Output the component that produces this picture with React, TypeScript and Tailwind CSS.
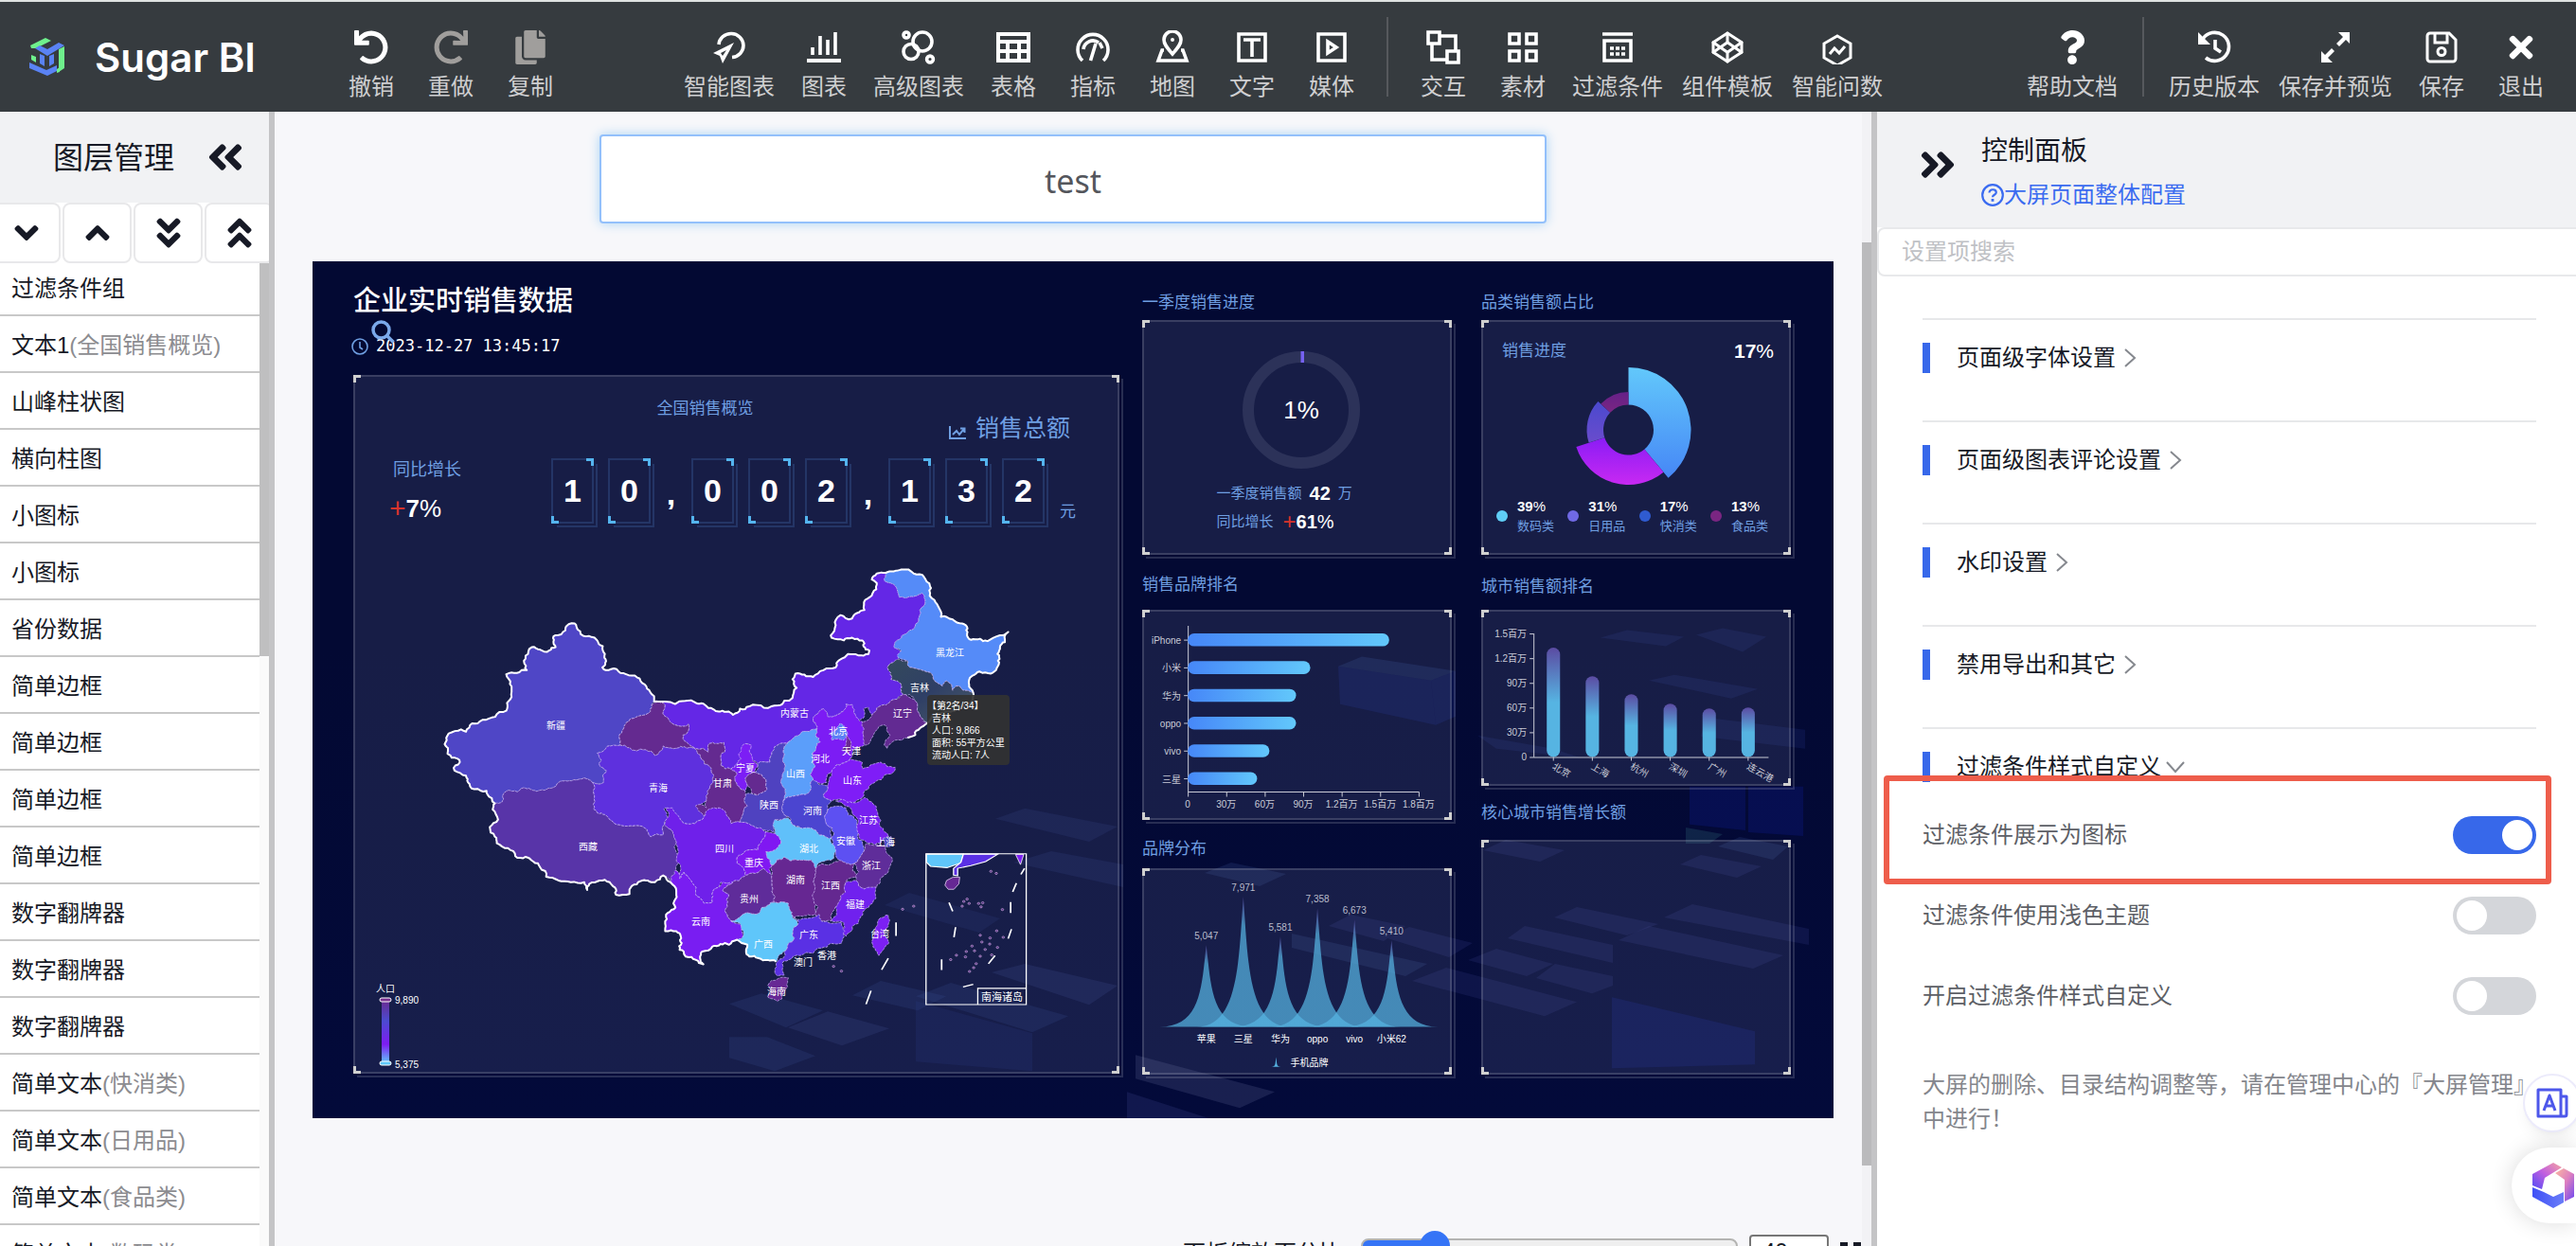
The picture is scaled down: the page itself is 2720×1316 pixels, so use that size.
import { useState } from "react"
import type { ReactNode } from "react"
import clsx from "clsx"
import {
  FaAngleDoubleDown,
  FaAngleDoubleLeft,
  FaAngleDoubleRight,
  FaAngleDoubleUp,
  FaAngleDown,
  FaAngleUp,
  FaCopy,
  FaQuestion,
  FaRedo,
  FaTimes,
  FaUndo,
} from "react-icons/fa"
import { FiCodepen } from "react-icons/fi"

/* ---------- toolbar icons ---------- */

function Icon({ children }: { children: ReactNode }) {
  return (
    <svg
      viewBox="0 0 36 36"
      className="size-9"
      fill="none"
      stroke="currentColor"
      strokeWidth="3.6"
      aria-hidden="true"
    >
      {children}
    </svg>
  )
}

const SmartIcon = () => (
  <Icon>
    <path d="M7 15A13 12.5 0 1 1 21 28.5" />
    <path
      fillRule="evenodd"
      d="M23 13 1 24l7 3 3 8ZM15 21l-4 6-2-3Z"
      fill="currentColor"
      stroke="none"
    />
  </Icon>
)

const BarsIcon = () => (
  <Icon>
    <path d="M0 32h36" strokeWidth="4" />
    <path d="M6 18v8M14 6v20M22 10v16M30 2v24" />
  </Icon>
)

const BubblesIcon = () => (
  <Icon>
    <circle cx="22" cy="12" r="10" />
    <circle cx="10" cy="22.5" r="8" />
    <circle cx="5" cy="5" r="3" />
    <circle cx="30" cy="30.5" r="3.4" />
  </Icon>
)

const TableIcon = () => (
  <Icon>
    <path
      fillRule="evenodd"
      fill="currentColor"
      stroke="none"
      d="M0 2h36v32H0ZM4 6v4h28V6ZM4 14v6h6v-6ZM14 14v6h8v-6ZM26 14v6h6v-6ZM4 24v6h6v-6ZM14 24v6h8v-6ZM26 24v6h6v-6Z"
    />
  </Icon>
)

const GaugeIcon = () => (
  <Icon>
    <path d="M7 32A16 16 0 1 1 29 32" />
    <path d="M8 20A10 10 0 0 1 24 13" />
    <path d="M15.500 32 21 14M28 19l-3-6" />
  </Icon>
)

const MapIcon = () => (
  <Icon>
    <path d="M18 25c-5-6-9-10-9-15a9 9 0 0 1 18 0c0 5-4 9-9 15Z" />
    <circle cx="18" cy="10" r="2" fill="currentColor" stroke="none" />
    <path d="M9 21H7L3 32h30l-4-11h-2" />
  </Icon>
)

const TextIcon = () => (
  <Icon>
    <path d="M4 4h28v28H4ZM9 10h18M18 10v18" />
  </Icon>
)

const MediaIcon = () => (
  <Icon>
    <path d="M4 4h28v28H4Z" />
    <path d="m14 12 9 6-9 6Z" />
  </Icon>
)

const LinkIcon = () => (
  <Icon>
    <path d="M2 2h12v12H2ZM22 22h12v12H22ZM14 6h17v16M6 14v17h16" />
  </Icon>
)

const MaterialIcon = () => (
  <Icon>
    <path d="M4 4h10v10H4ZM22 4h10v10H22ZM4 22h10v10H4ZM22 22h10v10H22Z" />
  </Icon>
)

const FilterIcon = () => (
  <Icon>
    <path d="M2 4h32M4 11h28v21H4Z" />
    <path d="M10 19h16M10 25h16" strokeDasharray="4 2" />
  </Icon>
)

const AskIcon = () => (
  <Icon>
    <path d="M18 6 32 14v15L18 37 4 29V14Z" strokeWidth="3" />
    <path d="m10 25 5-6 5 5 6-7" strokeWidth="3" />
  </Icon>
)

const HistoryIcon = () => (
  <Icon>
    <path d="M6 9a15 15 0 1 1 3 20" />
    <path d="M1 2v13h13Z" fill="currentColor" stroke="none" />
    <path d="M19 10v9l6 4" />
  </Icon>
)

const ExpandIcon = () => (
  <Icon>
    <path
      d="M33 2v12l-4-4-7 7-3-3 7-7-5-5ZM3 34V22l4 4 7-7 3 3-7 7 5 5Z"
      fill="currentColor"
      stroke="none"
    />
  </Icon>
)

const SaveIcon = () => (
  <Icon>
    <path
      d="M6 3h20l7 7v20a3 3 0 0 1-3 3H6a3 3 0 0 1-3-3V6a3 3 0 0 1 3-3Z"
      strokeWidth="3"
    />
    <path d="M11 4v9h13V4" strokeWidth="3" />
    <circle cx="18" cy="22.500" r="4" strokeWidth="3" />
  </Icon>
)

/* ---------- header ---------- */

type Tool = { label: string; icon: ReactNode; disabled?: boolean }

const editTools: Tool[] = [
  { label: "撤销", icon: <FaUndo /> },
  { label: "重做", icon: <FaRedo />, disabled: true },
  { label: "复制", icon: <FaCopy />, disabled: true },
]

const chartTools: Tool[] = [
  { label: "智能图表", icon: <SmartIcon /> },
  { label: "图表", icon: <BarsIcon /> },
  { label: "高级图表", icon: <BubblesIcon /> },
  { label: "表格", icon: <TableIcon /> },
  { label: "指标", icon: <GaugeIcon /> },
  { label: "地图", icon: <MapIcon /> },
  { label: "文字", icon: <TextIcon /> },
  { label: "媒体", icon: <MediaIcon /> },
]

const extraTools: Tool[] = [
  { label: "交互", icon: <LinkIcon /> },
  { label: "素材", icon: <MaterialIcon /> },
  { label: "过滤条件", icon: <FilterIcon /> },
  { label: "组件模板", icon: <FiCodepen /> },
  { label: "智能问数", icon: <AskIcon /> },
]

const pageTools: Tool[] = [
  { label: "历史版本", icon: <HistoryIcon /> },
  { label: "保存并预览", icon: <ExpandIcon /> },
  { label: "保存", icon: <SaveIcon /> },
  { label: "退出", icon: <FaTimes /> },
]

function ToolGroup({ tools }: { tools: Tool[] }) {
  return (
    <div className="flex pt-5">
      {tools.map((tool) => (
        <button
          key={tool.label}
          type="button"
          className="flex min-w-[84px] flex-col items-center gap-2 px-2.5 text-2xl text-[#cfcfd1]"
        >
          <span
            className={clsx(
              "text-4xl",
              tool.disabled ? "text-[#a09e9c]" : "text-white"
            )}
          >
            {tool.icon}
          </span>
          {tool.label}
        </button>
      ))}
    </div>
  )
}

const Divider = () => <div className="mx-4 h-[84px] w-0.5 bg-[#56595d]" />

function Logo() {
  return (
    <svg viewBox="0 0 37 40" className="w-[37px]" aria-hidden="true">
      <path d="M1 8 17 0l6 3L7 11H2Z" fill="#6ff08c" />
      <path d="m6 11 5-3 8 4 12-7 6 3-18 11Z" fill="#5a83f5" />
      <path d="m31 12 6-3v23l-6 4Z" fill="#6ff08c" />
      <path d="m29 33 3-2v5l-3 1ZM2 18l5 2v6l-5-3Z" fill="#6ff08c" />
      <path d="m11 17 5 2v11l-5-3ZM21 19l5-2v10l-5 3Z" fill="#5a83f5" />
      <path d="m0 26 18 8 11-5v6l-10 5L0 32Z" fill="#5a83f5" />
    </svg>
  )
}

function Header() {
  return (
    <header className="flex h-[118px] shrink-0 items-center border-t-2 border-[#dfe2e2] bg-[#363b3f] pr-4 pl-[31px]">
      <a href="#home" className="flex items-center gap-8">
        <Logo />
        <span className="font-['Inter',sans-serif] text-[42px] font-semibold whitespace-nowrap text-white">
          Sugar BI
        </span>
      </a>
      <nav className="flex flex-1 items-center pl-20 leading-8">
        <ToolGroup tools={editTools} />
        <div className="ml-[110px] flex items-center">
          <ToolGroup tools={chartTools} />
          <Divider />
          <ToolGroup tools={extraTools} />
        </div>
        <div className="ml-auto flex items-center">
          <ToolGroup tools={[{ label: "帮助文档", icon: <FaQuestion /> }]} />
          <Divider />
          <ToolGroup tools={pageTools} />
        </div>
      </nav>
    </header>
  )
}

/* ---------- layer list ---------- */

const layers: [string, string?][] = [
  ["过滤条件组"],
  ["文本1", "(全国销售概览)"],
  ["山峰柱状图"],
  ["横向柱图"],
  ["小图标"],
  ["小图标"],
  ["省份数据"],
  ["简单边框"],
  ["简单边框"],
  ["简单边框"],
  ["简单边框"],
  ["数字翻牌器"],
  ["数字翻牌器"],
  ["数字翻牌器"],
  ["简单文本", "(快消类)"],
  ["简单文本", "(日用品)"],
  ["简单文本", "(食品类)"],
  ["简单文本", "(数码类)"],
]

const orderButtons = [
  { label: "下移", icon: <FaAngleDown /> },
  { label: "上移", icon: <FaAngleUp /> },
  { label: "置底", icon: <FaAngleDoubleDown /> },
  { label: "置顶", icon: <FaAngleDoubleUp /> },
]

function LayerPanel() {
  return (
    <aside className="flex w-[290px] shrink-0 flex-col overflow-hidden border-r-6 border-[#c4c4c6] bg-white">
      <div className="flex h-24 shrink-0 items-center justify-between bg-[#f1f2f4] pr-6 pl-14">
        <h2 className="pt-0.5 text-[32px] text-[#171a26]">图层管理</h2>
        <button type="button" aria-label="收起图层" className="text-[44px]">
          <FaAngleDoubleLeft />
        </button>
      </div>
      <div className="-ml-[9px] flex shrink-0 gap-0.5">
        {orderButtons.map((b) => (
          <button
            key={b.label}
            type="button"
            aria-label={b.label}
            className="flex h-16 w-[73px] shrink-0 items-center justify-center rounded-lg border-2 border-[#e8e8ea] text-[40px]"
          >
            {b.icon}
          </button>
        ))}
      </div>
      <div className="flex min-h-0 flex-1 overflow-hidden">
        <ul className="-mt-1 flex-1">
          {layers.map(([name, note], i) => (
            <li key={i} className="h-[60px] border-b-2 border-[#c8c8c8]">
              <button type="button" className="h-full w-full px-3 pt-1 text-left text-2xl">
                {name}
                {note && <span className="text-[#8c8c90]">{note}</span>}
              </button>
            </li>
          ))}
        </ul>
        <div className="w-2.5 bg-[#fafafa]">
          <div className="h-2/5 bg-[#bfbfc0]" />
        </div>
      </div>
    </aside>
  )
}

/* ---------- dashboard pieces ---------- */

const corners = [
  "top-0 left-0 border-t-3 border-l-3",
  "top-0 right-0 border-t-3 border-r-3",
  "bottom-0 left-0 border-b-3 border-l-3",
  "bottom-0 right-0 border-b-3 border-r-3",
]

function Frame({ children, className }: { children?: ReactNode; className?: string }) {
  return (
    <div className={clsx("relative bg-[#8f92b8]/15", className)}>
      {children}
      <div className="pointer-events-none absolute inset-0 border-2 border-white/15" />
      <div className="pointer-events-none absolute inset-0 top-1 left-1 -right-1 -bottom-1 border-r-2 border-b-2 border-white/15" />
      {corners.map((c) => (
        <div key={c} className={clsx("absolute size-2 border-[#cfcfcf]", c)} />
      ))}
    </div>
  )
}

function WidgetTitle({ children, className }: { children: ReactNode; className?: string }) {
  return (
    <h3 className={clsx("flex items-end text-[17px] leading-6 text-[#6f9fe2]", className)}>
      {children}
    </h3>
  )
}

const scenery: [string, string][] = [
  ["1566,897 1590,886 1652,897 1626,909", "#3a4390"],
  ["1641,968 1665,957 1751,975 1718,987", "#3a4390"],
  ["1592,990 1610,977 1703,997 1703,1016", "#3a4390"],
  ["1550,1013 1580,1001 1640,1017 1612,1030", "#3a4390"],
  ["1622,1032 1642,1017 1703,1030 1703,1040 1681,1048", "#3a4390"],
  ["1491,1035 1527,1021 1665,1057 1631,1072", "#3a4390"],
  ["1757,968 1787,954 1910,980 1910,997", "#3a4390"],
  ["1709,992 1741,977 1883,1008 1851,1022", "#3a4390"],
  ["1814,893 1837,883 1888,893 1872,907", "#3f5ca0"],
  ["1774,912 1796,902 1860,914 1834,926", "#3a4390"],
  ["1780,873 1819,880 1805,890 1780,890", "#3f8a90"],
  ["1784,830 1843,830 1843,876 1784,870", "#1222c0"],
  ["1846,830 1904,830 1904,882 1846,878", "#1222c0"],
  ["1702,1052 1853,1088 1853,1123 1702,1127", "#1c2cb0"],
  ["1199,1113 1346,1152 1309,1169 1199,1138", "#7377a8"],
  ["1190,1152 1277,1180 1190,1180", "#4a50a0"],
  ["1403,977 1426,965 1484,977 1461,993", "#3a4390"],
  ["1465,990 1488,978 1555,995 1530,1010", "#3a4390"],
  ["1364,985 1507,1017 1484,1030 1364,1000", "#3f5ca0"],
  ["1272,921 1300,910 1358,922 1330,935", "#3f5ca0"],
  ["1413,703 1438,693 1537,708 1511,718", "#3a5ab0"],
  ["1413,703 1511,718 1516,765 1415,743", "#2030a8"],
  ["1511,718 1537,708 1537,756 1516,765", "#2030a8"],
  ["1690,673 1718,665 1778,672 1759,682", "#2a3790"],
  ["1791,670 1819,663 1865,672 1840,688", "#2a3790"],
  ["1741,718 1768,712 1856,727 1828,737", "#2a3790"],
  ["1801,757 1906,770 1906,790 1796,777", "#2a3790"],
  ["1560,776 1640,790 1670,800 1580,790", "#2a3790"],
  ["832,1084 874,1067 939,1085 889,1103", "#3c4a98"],
  ["900,1050 930,1035 999,1051 969,1066", "#2c4490"],
  ["770,1059 804,1048 869,1066 830,1084", "#2c4490"],
  ["770,1094 810,1094 861,1114 818,1130 770,1116", "#2c4490"],
  ["1047,1026 1082,1017 1180,1040 1150,1060", "#3c4a98"],
  ["967,1051 1004,1037 1128,1072 1090,1089", "#2c4490"],
  ["967,1056 1090,1090 1090,1130 967,1120", "#1c2c80"],
  ["1051,864 1082,853 1180,872 1150,888", "#2c3a88"],
  ["1070,910 1110,898 1186,912 1186,936", "#2c3a88"],
  ["934,955 960,942 1056,969 1034,984", "#24347c"],
]

function Scenery() {
  return (
    <svg
      viewBox="330 276 1606 904"
      preserveAspectRatio="none"
      className="absolute inset-0 size-full"
      aria-hidden="true"
    >
      {scenery.map(([points, fill]) => (
        <polygon key={points} points={points} fill={fill} opacity=".2" />
      ))}
    </svg>
  )
}

/* ---------- china map ---------- */

type Pt = [number, number]

const parse = (s: string): Pt[] =>
  s.split(" ").map((p) => p.split(",").map(Number) as Pt)

// Breaks straight segments into a slightly jagged line, the same way in both
// directions so that neighbours share their border.
function jag(a: Pt, b: Pt, depth: number): Pt[] {
  const len = Math.hypot(b[0] - a[0], b[1] - a[1])
  if (depth === 0 || len < 9) return [b]
  const flip = a[0] > b[0] || (a[0] === b[0] && a[1] > b[1]) ? -1 : 1
  const h = Math.sin((a[0] + b[0]) * 12.9898 + (a[1] + b[1]) * 78.233) * 43758.5453
  const r = (h - Math.floor(h) - 0.5) * 0.4 * flip
  const m: Pt = [
    (a[0] + b[0]) / 2 - (b[1] - a[1]) * r,
    (a[1] + b[1]) / 2 + (b[0] - a[0]) * r,
  ]
  return [...jag(a, m, depth - 1), ...jag(m, b, depth - 1)]
}

function rough(s: string, close = true) {
  const pts = parse(s)
  const ring = close ? [...pts, pts[0]] : pts
  const out: Pt[] = [ring[0]]
  for (let i = 1; i < ring.length; i++) out.push(...jag(ring[i - 1], ring[i], 3))
  return "M" + out.map((p) => p.map(Math.round).join(",")).join("L") + (close ? "Z" : "")
}

const provinces: [string, string][] = [
  ["#4f46c6", "70,572 78,545 108,533 120,540 135,515 160,505 218,478 220,455 230,430 218,370 268,358 266,345 280,290 300,297 322,300 338,290 337,255 362,240 370,222 385,220 392,238 412,258 438,268 458,310 452,350 460,358 510,370 555,400 578,450 572,460 565,485 530,500 503,532 496,580 440,603 450,625 445,640 462,655 455,690 428,690 400,680 355,686 340,700 300,713 265,707 245,718 218,716 208,748 190,752 172,725 170,715 140,710 125,690 120,670 92,655 105,630 100,620 75,605"],
  ["#5834a8", "190,752 208,748 218,716 245,718 265,707 300,713 340,700 355,686 400,680 428,690 430,755 440,780 470,800 520,818 550,820 570,850 600,845 603,815 620,830 632,870 640,960 630,975 618,990 600,965 580,985 545,982 518,1020 485,1022 482,1000 470,985 445,980 420,990 415,1008 408,985 375,985 345,980 300,940 265,910 240,908 195,870 190,850 178,822 198,800 185,770"],
  ["#5e30de", "440,603 496,580 530,595 580,610 590,600 600,582 625,590 660,588 690,608 700,635 718,650 722,690 708,715 705,745 690,755 700,790 678,812 655,812 640,795 620,770 603,765 608,800 603,815 600,845 570,850 550,820 520,818 470,800 440,780 430,755 428,690 455,690 462,655 445,640 450,625"],
  ["#6427e6", "578,450 680,455 710,470 735,480 770,490 810,465 880,462 915,440 918,425 925,410 915,385 922,368 965,378 990,358 1020,350 1050,310 1100,310 1102,300 1085,270 1060,262 1040,270 1010,262 1008,255 1020,225 1032,195 1060,205 1090,180 1092,150 1120,105 1108,90 1120,72 1142,70 1140,95 1165,108 1175,142 1200,140 1230,130 1238,150 1225,180 1222,215 1200,240 1165,275 1162,290 1180,310 1172,330 1148,345 1155,385 1175,395 1185,430 1150,455 1120,470 1108,490 1100,468 1088,472 1080,505 1068,490 1060,460 1045,458 1038,480 1000,495 990,472 972,490 975,530 935,545 905,570 885,575 865,600 860,630 830,635 815,615 808,575 795,580 790,620 765,650 740,640 740,610 750,600 748,572 712,575 710,600 680,590 665,580 648,550 660,540 662,517 635,522 612,500 600,455"],
  ["#642a90", "572,460 578,455 600,455 612,500 635,522 662,517 660,540 648,550 665,580 680,590 710,600 712,575 748,572 750,600 740,610 740,640 765,650 780,665 782,700 800,715 805,760 792,790 788,808 765,812 760,795 735,765 712,775 700,790 678,760 690,755 705,765 705,745 708,715 722,690 718,650 700,635 690,608 660,588 625,590 600,582 590,600 580,610 530,595 496,580 503,532 530,500 565,485"],
  ["#642a90", "805,670 825,660 850,680 850,715 830,728 815,722 805,700"],
  ["#7c1ef5", "765,650 790,620 790,590 800,575 815,580 810,600 818,625 830,640 825,660 805,670 805,700 800,715 782,700 780,665"],
  ["#558bf8", "1142,70 1180,60 1210,72 1235,82 1252,115 1270,170 1276,200 1305,208 1340,230 1350,268 1390,272 1420,255 1440,245 1432,275 1420,290 1415,330 1398,368 1370,362 1352,375 1355,425 1335,418 1320,405 1305,418 1290,390 1280,405 1258,385 1250,365 1220,355 1200,350 1195,330 1172,320 1180,300 1162,290 1165,275 1200,240 1222,215 1225,180 1238,150 1230,130 1200,140 1175,142 1165,108 1140,95"],
  ["url(#hover)", "1148,345 1172,325 1195,330 1200,350 1220,355 1250,365 1258,385 1280,405 1290,390 1305,418 1320,405 1335,418 1355,425 1352,450 1310,478 1290,480 1240,515 1230,500 1215,450 1200,430 1185,430 1175,395 1155,385"],
  ["#622a92", "1190,430 1215,450 1230,500 1242,515 1225,530 1195,558 1165,565 1145,590 1138,580 1152,550 1140,520 1125,525 1110,555 1092,580 1085,540 1082,515 1108,490 1120,470 1150,455"],
  ["#7c1cf4", "972,490 990,472 1000,495 1038,480 1045,458 1060,460 1068,490 1085,510 1088,555 1090,580 1065,590 1055,620 1020,640 1000,665 998,690 965,682 970,640 965,600 982,570 975,530"],
  ["#5b7ff6", "1008,545 1030,515 1048,540 1040,565 1010,565"],
  ["#6a2a90", "1045,550 1058,575 1050,605 1035,595"],
  ["#5b9efa", "935,545 975,530 982,570 965,600 970,640 965,682 958,715 930,728 892,745 890,700 895,655 892,600 905,570"],
  ["#4f42c0", "860,630 865,600 885,575 905,570 892,600 895,655 890,700 892,745 902,790 872,800 870,838 830,825 788,808 792,790 805,760 800,725 830,728 850,715 850,680 825,660 830,635"],
  ["#7f1df7", "1000,700 1010,660 1020,640 1055,620 1085,630 1085,650 1100,645 1130,630 1165,645 1155,665 1120,685 1100,710 1085,735 1060,750 1010,745 990,725"],
  ["#4b45d0", "892,745 930,728 958,715 965,682 1000,700 990,725 1010,745 1000,775 995,800 1012,825 1010,855 960,825 930,820 902,790"],
  ["#7620f0", "1020,745 1060,750 1090,735 1112,755 1128,820 1150,850 1130,870 1100,870 1078,855 1075,810 1045,760"],
  ["#5d50f2", "1000,775 1020,760 1045,765 1070,800 1075,840 1085,870 1085,900 1065,930 1030,920 1010,880 1012,825 995,800"],
  ["#4c46c8", "1135,855 1155,850 1160,875 1138,880"],
  ["#60c0fa", "872,800 905,795 915,815 960,825 1010,855 1018,880 1015,915 985,925 970,945 960,920 930,920 895,910 865,935 850,895 880,880 885,860 872,835"],
  ["#8018f2", "850,835 885,860 880,880 850,895 865,935 862,970 845,945 800,965 780,930 785,905 830,890 840,860"],
  ["#6f20ea", "603,815 608,765 622,765 640,795 655,812 678,812 700,790 725,765 745,770 760,795 765,812 788,808 830,825 850,835 840,860 830,890 785,905 780,930 800,965 770,985 740,985 735,1000 720,1045 700,1048 680,1000 650,955 640,975 632,870 620,830"],
  ["#5f2c9a", "745,1010 770,985 800,965 845,945 865,980 870,1045 840,1060 825,1080 790,1085 765,1100 755,1050 760,1025"],
  ["#791df2", "630,950 640,975 650,955 680,1000 700,1048 720,1045 735,1000 745,985 770,985 745,1010 760,1025 755,1050 765,1100 790,1110 795,1145 780,1155 760,1170 720,1175 695,1190 698,1228 680,1215 655,1205 650,1190 640,1185 645,1165 632,1130 605,1130 605,1100 630,1060 632,1010 618,985"],
  ["#662792", "865,935 895,910 930,920 960,920 972,945 968,990 972,1080 935,1085 915,1090 905,1048 870,1045 865,980"],
  ["#642890", "972,945 985,930 1030,920 1065,930 1070,970 1045,985 1030,1050 1010,1100 985,1100 970,1080 968,990"],
  ["#5f2d9a", "1065,930 1085,900 1095,870 1140,880 1155,910 1145,960 1120,1000 1090,1005 1070,980"],
  ["#7021ee", "1045,985 1070,980 1090,1005 1118,1000 1100,1060 1080,1090 1045,1145 1035,1130 1040,1105 1010,1100 1020,1060 1030,1040"],
  ["#5fc6fa", "765,1100 790,1085 825,1080 840,1060 870,1045 905,1048 915,1090 928,1110 920,1150 895,1190 875,1220 855,1215 810,1205 805,1170 780,1155 795,1145 790,1115"],
  ["#5a30e4", "920,1150 928,1110 918,1088 980,1080 985,1100 1035,1105 1042,1130 1035,1165 985,1180 965,1195 905,1215 890,1225 895,1260 878,1262 875,1225 895,1190"],
  ["#662894", "855,1290 880,1270 905,1268 903,1295 878,1337 855,1325"],
  ["#7c20f4", "1125,1095 1148,1082 1145,1120 1125,1202 1108,1160"],
]

const border =
  "1195,558 1225,530 1242,515 1290,480 1310,478 1352,450 1355,425 1352,375 1370,362 1398,368 1415,330 1420,290 1432,275 1440,245 1420,255 1390,272 1350,268 1340,230 1305,208 1276,200 1270,170 1252,115 1235,82 1210,72 1180,60 1142,70 1120,72 1108,90 1120,105 1092,150 1090,180 1060,205 1032,195 1020,225 1008,255 1010,262 1040,270 1060,262 1085,270 1102,300 1100,310 1050,310 1020,350 990,358 965,378 922,368 915,385 925,410 918,425 915,440 880,462 810,465 770,490 735,480 710,470 680,455 578,450 555,400 510,370 460,358 452,350 458,310 438,268 412,258 392,238 385,220 370,222 362,240 337,255 338,290 322,300 300,297 280,290 266,345 268,358 218,370 230,430 220,455 218,478 160,505 135,515 120,540 108,533 78,545 70,572 75,605 100,620 105,630 92,655 120,670 125,690 140,710 170,715 172,725 190,752 185,770 198,800 178,822 190,850 195,870 240,908 265,910 300,940 345,980 375,985 408,985 415,1008 420,990 445,980 470,985 482,1000 485,1022 518,1020 545,982 580,985 600,965 618,985 632,1010 630,1060 605,1100 605,1130 632,1130 645,1165 640,1185 650,1190 655,1205 680,1215 698,1228 695,1190 720,1175 760,1170 780,1155 805,1170 810,1205 855,1215 875,1220"

// label positions in the svg's own pixels
const provinceLabels: [string, number, number][] = [
  ["新疆", 214, 187],
  ["西藏", 248, 315],
  ["青海", 322, 253],
  ["内蒙古", 466, 174],
  ["甘肃", 390, 248],
  ["宁夏", 414, 232],
  ["黑龙江", 630, 110],
  ["吉林", 598, 147],
  ["辽宁", 580, 174],
  ["北京", 512, 193],
  ["天津", 526, 214],
  ["河北", 493, 222],
  ["山西", 467, 238],
  ["陕西", 439, 271],
  ["山东", 527, 245],
  ["河南", 485, 277],
  ["江苏", 544, 287],
  ["安徽", 520, 309],
  ["上海", 562, 310],
  ["湖北", 481, 317],
  ["重庆", 423, 332],
  ["四川", 392, 317],
  ["贵州", 418, 370],
  ["云南", 367, 394],
  ["湖南", 467, 350],
  ["江西", 504, 356],
  ["浙江", 547, 335],
  ["福建", 530, 376],
  ["广西", 433, 418],
  ["广东", 481, 408],
  ["香港", 500, 430],
  ["澳门", 475, 437],
  ["海南", 447, 468],
  ["台湾", 556, 407],
]

const tooltipLines = [
  "【第2名/34】",
  "吉林",
  "人口: 9,866",
  "面积: 55平方公里",
  "流动人口: 7人",
]

const islets =
  "1340,1035 1345,1048 1332,1042 1368,1048 1378,1046 1374,1058 1328,1056 1398,953 1411,959 1426,1066 1412,1129 1372,1142 1376,1162 1395,1168 1428,1148 1396,1150 1414,1178 1352,1174 1358,1188 1372,1204 1338,1190 1336,1206 1400,1200 1384,1184 1314,1201 1300,1214 1362,1226 1356,1238 1346,1249 1183,1065 1210,1056 1034,1248 1015,1234"

function ChinaMap() {
  return (
    <svg viewBox="0 0 809 554" className="block w-full" role="img" aria-label="省份数据">
      <defs>
        <linearGradient id="hover" x1="0" y1="0" x2="1" y2="1">
          <stop offset="0" stopColor="#344a5c" />
          <stop offset=".5" stopColor="#2f3f66" />
          <stop offset="1" stopColor="#4a5c66" />
        </linearGradient>
        <linearGradient id="range" x1="0" y1="0" x2="0" y2="1">
          <stop offset="0" stopColor="#6b2a90" />
          <stop offset=".33" stopColor="#4b4bd0" />
          <stop offset=".7" stopColor="#7e1cf4" />
          <stop offset="1" stopColor="#60c8fa" />
        </linearGradient>
      </defs>

      <g transform="translate(67 0) scale(.4337 .3571)">
        {provinces.map(([fill, points]) => (
          <path
            key={points}
            d={rough(points)}
            fill={fill}
            stroke="#cdb8f5"
            strokeWidth=".7"
            strokeDasharray="3 1"
            vectorEffect="non-scaling-stroke"
          />
        ))}
        <path
          d={rough(border, false)}
          fill="none"
          stroke="#fff"
          strokeWidth="2"
          strokeLinejoin="round"
          vectorEffect="non-scaling-stroke"
        />
        <path
          d="M1167,1104v40M1148,1210l-16,34M1106,1306l-12,40M1296,1045l9,26M1312,1118l-4,30M1278,1213v32M1408,1202l-16,24M1448,1124l-8,28M1446,1044v32M1460,988l-9,26M1480,944l-9,18M1330,1295l25,-8"
          stroke="#fff"
          strokeWidth="4"
        />
        <path
          d="M1241,902h90l-6,26-34,14-40,-4-10,-12Z"
          fill="#5fc6fa"
          stroke="#fff"
          strokeWidth="3"
        />
        <path
          d="M1331,902h84l-30,22-36,12-32,8 0,22-10,-2v-20l18,-18Z"
          fill="#5a30e4"
          stroke="#fff"
          strokeWidth="3"
        />
        <path
          d="M1290,980l16,-10 16,0-2,20-12,16-14,0-8,-12Z"
          fill="#662894"
          stroke="#ead7f7"
          strokeWidth="2"
        />
        <path d="M1458,903h20l-8,30Z" fill="#7c20f4" stroke="#fff" strokeWidth="2" />
        {parse(islets).map(([x, y]) => (
          <circle key={`${x}-${y}`} cx={x} cy={y} r="3" fill="#4a2a80" stroke="#e3b8ea" strokeWidth="1.500" />
        ))}
        <g fill="none" stroke="#fff" strokeWidth="3">
          <path d="M1240,901h244v446h-244Z" />
          <path d="M1366,1347v-48h118" />
        </g>
      </g>

      <g fill="#fff" fontSize="10" textAnchor="middle">
        {provinceLabels.map(([name, x, y]) => (
          <text key={name} x={x} y={y + 3}>
            {name}
          </text>
        ))}
        <text x="685" y="477" fontSize="11">
          南海诸岛
        </text>
      </g>

      <g fill="#fff" fontSize="10">
        <text x="24" y="468">人口</text>
        <rect x="30" y="476" width="8" height="67" fill="url(#range)" />
        <rect x="28" y="474" width="12" height="4" rx="2" fill="#7a3090" stroke="#fff" />
        <rect x="28" y="541" width="12" height="4" rx="2" fill="#60c8fa" stroke="#fff" />
        <text x="44" y="480">9,890</text>
        <text x="44" y="548">5,375</text>
      </g>

      <rect x="606" y="154" width="87" height="74" rx="4" fill="#323232" fillOpacity=".92" />
      <g fill="#fff" fontSize="10">
        {tooltipLines.map((line, i) => (
          <text key={line} x={i === 0 ? 606 : 611} y={169 + i * 13}>
            {line}
          </text>
        ))}
      </g>
    </svg>
  )
}

/* ---------- sales overview ---------- */

function DigitBox({ digit }: { digit: string }) {
  return (
    <div className="relative flex h-[69px] w-[45px] items-center justify-center border-2 border-[#243566]">
      {digit}
      <div className="absolute top-1 left-1 -right-1.5 -bottom-1.5 border-r-2 border-b-2 border-[#243566]" />
      <div className="absolute -top-0.5 -right-0.5 size-2 border-t-3 border-r-3 border-[#54b4ee]" />
      <div className="absolute -bottom-0.5 -left-0.5 size-2 border-b-3 border-l-3 border-[#54b4ee]" />
    </div>
  )
}

function Overview() {
  return (
    <Frame className="mt-[18px]">
      <p className="pt-[26px] pr-[66px] text-center text-[17px] leading-5 text-[#6f9fe2]">
        全国销售概览
      </p>
      <p className="flex h-[22px] items-center justify-end gap-2.5 pr-[52px] text-[25px] text-[#6f9fe2]">
        <svg viewBox="0 0 18 14" className="mt-2 w-[18px]" fill="none" stroke="currentColor" strokeWidth="2" aria-hidden="true">
          <path d="M1 0v13h17" />
          <path d="m4 9 4-4 3 4 5-6M12 2.500h4.500V7" />
        </svg>
        销售总额
      </p>
      <div className="flex pt-5 pb-[27px] pl-[42px]">
        <div className="flex-1">
          <p className="text-lg leading-6 text-[#6f9fe2]">同比增长</p>
          <p className="flex items-center pt-[13px] text-[26px] leading-8 text-white">
            <span className="-ml-1 text-[30px] text-[#d8342c]">+</span>
            <b>7</b>%
          </p>
        </div>
        <div className="flex gap-[15px] text-[34px] font-bold text-white">
          {[..."10,002,132"].map((c, i) =>
            c === "," ? (
              <span key={i} className="w-[13px] pt-3 text-center">
                ,
              </span>
            ) : (
              <DigitBox key={i} digit={c} />
            )
          )}
        </div>
        <span className="mr-[46px] ml-4 self-end text-[17px] leading-6 text-[#6f9fe2]">元</span>
      </div>
      <ChinaMap />
    </Frame>
  )
}

/* ---------- small charts ---------- */

function QuarterProgress() {
  return (
    <Frame className="flex h-[248px] flex-col items-center pt-[33px] pl-2 text-[15px] text-[#6f9fe2]">
      <svg viewBox="0 0 124 124" className="h-[124px] shrink-0" role="img" aria-label="1%">
        <circle cx="62" cy="62" r="56" fill="none" stroke="#2c3259" strokeWidth="12" />
        <path d="M61.500 0v12h3.500V0Z" fill="#7561f0" />
        <text x="62" y="71" fontSize="26" fontWeight="500" fill="#fff" textAnchor="middle">
          1%
        </text>
      </svg>
      <div className="mt-[11px] w-[178px]">
        <p className="flex h-[30px] items-center gap-2">
          一季度销售额 <b className="text-xl text-white">42</b> 万
        </p>
        <p className="flex h-[30px] items-center gap-2.5">
          同比增长
          <span className="flex items-center text-xl text-white">
            <span className="text-2xl text-[#d8342c]">+</span>
            <b>61</b>%
          </span>
        </p>
      </div>
    </Frame>
  )
}

const categories = [
  { name: "数码类", share: 39, radius: 66, fill: "url(#rose0)", dot: "bg-[#5fcdf5]" },
  { name: "日用品", share: 31, radius: 58, fill: "url(#rose1)", dot: "bg-[#7069e4]" },
  { name: "快消类", share: 17, radius: 44, fill: "url(#rose2)", dot: "bg-[#2f5bd0]" },
  { name: "食品类", share: 13, radius: 40, fill: "url(#rose3)", dot: "bg-[#7a2682]" },
]

const roseColors = [
  ["#62c8fb", "#4687f6"],
  ["#8a1cf5", "#c829f2"],
  ["#4a49cf", "#6a4ccc"],
  ["#652088", "#7a2682"],
]

function slice(from: number, to: number, r: number) {
  const at = (share: number, radius: number) => {
    const a = (share / 100) * Math.PI * 2
    return `${Math.sin(a) * radius} ${-Math.cos(a) * radius}`
  }
  return `M${at(from, 26.5)}L${at(from, r)}A${r} ${r} 0 0 1 ${at(to, r)}L${at(to, 26.5)}A26.5 26.5 0 0 0 ${at(from, 26.5)}Z`
}

function CategoryShare() {
  let start = 0
  return (
    <Frame className="flex h-[248px] flex-col pt-3">
      <div className="flex h-[38px] shrink-0 items-center justify-between pt-1 pr-[18px] pl-[22px]">
        <span className="text-[17px] text-[#6f9fe2]">销售进度</span>
        <span className="text-[21px] text-white">
          <b>17</b>%
        </span>
      </div>
      <svg viewBox="-66 -66 132 132" className="mr-4 h-[132px] shrink-0" role="img" aria-label="品类销售额占比">
        {roseColors.map(([a, b], i) => (
          <linearGradient key={a} id={`rose${i}`} x1="0" y1="0" x2="0" y2="1">
            <stop offset="0" stopColor={a} />
            <stop offset="1" stopColor={b} />
          </linearGradient>
        ))}
        {categories.map((c) => {
          const from = start
          start += c.share
          return <path key={c.name} d={slice(from, start, c.radius)} fill={c.fill} />
        })}
      </svg>
      <ul className="mt-1 flex justify-between pr-6 pl-4">
        {categories.map((c) => (
          <li key={c.name} className="flex items-center gap-2.5">
            <span className={clsx("size-3 rounded-full", c.dot)} />
            <span className="text-[13px] leading-[21px] text-[#6f9fe2]">
              <span className="block text-[15px] text-white">
                <b>{c.share}</b>%
              </span>
              {c.name}
            </span>
          </li>
        ))}
      </ul>
    </Frame>
  )
}

const brands: [string, number][] = [
  ["iPhone", 212],
  ["小米", 129],
  ["华为", 114],
  ["oppo", 114],
  ["vivo", 86],
  ["三星", 73],
]

function BrandRanking() {
  return (
    <Frame>
      <svg viewBox="0 0 326 221" className="block w-full" fontSize="10" fill="#c9cbd6" role="img" aria-label="销售品牌排名">
        <linearGradient id="brand">
          <stop offset="0" stopColor="#4687f8" />
          <stop offset="1" stopColor="#62c8fb" />
        </linearGradient>
        <path d="M48.500 17v175h243" fill="none" stroke="#c9cbd6" />
        {brands.map(([name, w], i) => {
          const y = 32 + i * 29.2
          return (
            <g key={name}>
              <path d={`M44 ${y}h4`} stroke="#c9cbd6" />
              <text x="41" y={y + 4} textAnchor="end">
                {name}
              </text>
              <rect x="48" y={y - 7} width={w} height="13.500" rx="6.700" fill="url(#brand)" />
            </g>
          )
        })}
        {["0", "30万", "60万", "90万", "1.2百万", "1.5百万", "1.8百万"].map((t, i) => (
          <g key={t} textAnchor="middle">
            <path d={`M${48.5 + i * 40.5} 192v5`} stroke="#c9cbd6" />
            <text x={48 + i * 40.5} y="208">
              {t}
            </text>
          </g>
        ))}
      </svg>
    </Frame>
  )
}

const cities: [string, number][] = [
  ["北京", 115],
  ["上海", 85],
  ["杭州", 66],
  ["深圳", 56],
  ["广州", 51],
  ["连云港", 52],
]

function CityRanking() {
  return (
    <Frame>
      <svg viewBox="0 0 326 185" className="block w-full" fontSize="10" fill="#c9cbd6" role="img" aria-label="城市销售额排名">
        <linearGradient id="city" x1="0" y1="0" x2="0" y2="1">
          <stop offset="0" stopColor="#5b4ba2" />
          <stop offset=".5" stopColor="#56b4e2" />
        </linearGradient>
        <path d="M55.500 25v130.500h247" fill="none" stroke="#c9cbd6" />
        {["0", "30万", "60万", "90万", "1.2百万", "1.5百万"].map((t, i) => (
          <g key={t} textAnchor="end">
            <path d={`M51 ${155.5 - i * 26}h4`} stroke="#c9cbd6" />
            <text x="48" y={159 - i * 26}>
              {t}
            </text>
          </g>
        ))}
        {cities.map(([name, h], i) => {
          const x = 76 + i * 41
          return (
            <g key={name}>
              <rect x={x - 7} y={155 - h} width="14" height={h} rx="7" fill="url(#city)" />
              <path d={`M${x} 155v4`} stroke="#c9cbd6" />
              <text transform={`translate(${x - 2} 167) rotate(30)`}>{name}</text>
            </g>
          )
        })}
      </svg>
    </Frame>
  )
}

const peaks: [string, string, number][] = [
  ["苹果", "5,047", 86],
  ["三星", "7,971", 137],
  ["华为", "5,581", 95],
  ["oppo", "7,358", 125],
  ["vivo", "6,673", 113],
  ["小米62", "5,410", 91],
]

function BrandPeaks() {
  return (
    <Frame>
      <svg viewBox="0 0 326 218" className="block w-full" fontSize="10" textAnchor="middle" role="img" aria-label="品牌分布">
        <linearGradient id="peak" x1="0" y1="0" x2="0" y2="1">
          <stop offset="0" stopColor="#5b4ba2" />
          <stop offset=".22" stopColor="#56b4e2" />
        </linearGradient>
        {peaks.map(([name, value, h], i) => {
          const x = 67.5 + i * 39
          return (
            <g key={name}>
              <path
                d={`M${x - 49} 167C${x - 5} 167 ${x - 5} ${167 - h / 2} ${x} ${167 - h}C${x + 5} ${167 - h / 2} ${x + 5} 167 ${x + 49} 167Z`}
                fill="url(#peak)"
                opacity=".72"
              />
              <text x={x} y={161 - h} fill="#b9bccb">
                {value}
              </text>
              <text x={x} y="183" fill="#fff">
                {name}
              </text>
            </g>
          )
        })}
        <path d="M136 209C141 209 140 206 141 199C142 206 141 209 146 209Z" fill="#56b4e2" />
        <text x="156" y="208" fill="#fff" textAnchor="start">
          手机品牌
        </text>
      </svg>
    </Frame>
  )
}

function Dashboard() {
  return (
    <div className="relative mt-10 flex gap-6 bg-[linear-gradient(#030933_45%,#030a3a)] pr-[45px] pb-[46px] pl-[43px]">
      <Scenery />
      <section className="relative flex-[809_0_0%] pt-[22px]">
        <h2 className="text-[29px] leading-10 font-medium text-white">企业实时销售数据</h2>
        <p className="mt-4 flex h-6 items-center gap-2 font-['DejaVu_Sans_Mono',monospace] text-[17px] text-white">
          <svg viewBox="0 0 18 18" className="-ml-0.5 size-[18px]" fill="none" stroke="#6f9fe2" strokeWidth="1.600" aria-hidden="true">
            <circle cx="9" cy="9" r="8" />
            <path d="M9 4v6l3 2" />
          </svg>
          2023-12-27 13:45:17
        </p>
        {/* filter condition shown as an icon, floats over the clock */}
        <button type="button" aria-label="过滤条件" className="absolute top-[62px] left-[19px]">
          <svg viewBox="0 0 25 25" className="size-[25px]" fill="none" stroke="#7aa8ea" strokeWidth="3.500" aria-hidden="true">
            <circle cx="10.500" cy="10.500" r="8.500" />
            <path d="m16.500 16.500 7 7" />
          </svg>
        </button>
        <Overview />
      </section>
      <div className="relative flex flex-[685_0_0%] gap-[31px]">
        <section className="flex-1">
          <WidgetTitle className="h-[62px] pb-1.5">一季度销售进度</WidgetTitle>
          <QuarterProgress />
          <WidgetTitle className="h-[58px] pb-3.5">销售品牌排名</WidgetTitle>
          <BrandRanking />
          <WidgetTitle className="h-[51px] pb-2">品牌分布</WidgetTitle>
          <BrandPeaks />
        </section>
        <section className="flex flex-1 flex-col">
          <WidgetTitle className="h-[62px] pb-1.5">品类销售额占比</WidgetTitle>
          <CategoryShare />
          <WidgetTitle className="h-[58px] pb-3">城市销售额排名</WidgetTitle>
          <CityRanking />
          <WidgetTitle className="h-[57px] pb-4">核心城市销售增长额</WidgetTitle>
          <Frame className="flex-1" />
        </section>
      </div>
    </div>
  )
}

/* ---------- canvas area ---------- */

function ZoomBar() {
  const [zoom, setZoom] = useState(40)
  const filled = `${(zoom / 240) * 100}%`

  return (
    <div className="mt-[119px] flex items-start justify-end gap-3 text-2xl">
      <label htmlFor="zoom" className="mr-2 pt-2 leading-8">
        面板缩放百分比
      </label>
      <input
        id="zoom"
        type="range"
        max="240"
        value={zoom}
        onChange={(e) => setZoom(Number(e.target.value))}
        style={{
          backgroundImage: `linear-gradient(to right, #3574f6 ${filled}, #efefef ${filled})`,
        }}
        className="mt-2 h-4 w-[398px] appearance-none rounded-lg border-2 border-[#b4b4b2] [&::-webkit-slider-thumb]:size-8 [&::-webkit-slider-thumb]:appearance-none [&::-webkit-slider-thumb]:rounded-full [&::-webkit-slider-thumb]:bg-[#3574f6]"
      />
      <input
        aria-label="缩放比例"
        value={zoom}
        onChange={(e) => setZoom(Number(e.target.value) || 0)}
        className="mt-1 h-9 w-[84px] shrink-0 rounded border-2 border-[#767676] bg-white px-3 text-2xl"
      />
      <button type="button" aria-label="全屏" className="mt-3">
        <svg viewBox="0 0 22 22" className="size-[22px]" fill="none" stroke="currentColor" strokeWidth="4" aria-hidden="true">
          <path d="M2 8V2h6M14 2h6v6M20 14v6h-6M8 20H2v-6" />
        </svg>
      </button>
    </div>
  )
}

function Stage() {
  return (
    <main className="relative min-w-0 flex-1 overflow-hidden bg-[#f7f7fa] px-10 pt-6">
      <input
        aria-label="大屏名称"
        defaultValue="test"
        className="mx-auto block h-[94px] w-[1000px] max-w-full rounded border-2 border-[#93c0fb] bg-white pt-1 text-center font-['Noto_Sans','Noto_Sans_CJK_SC',sans-serif] text-[34px] text-[#54565c] shadow-[0_0_12px_#a9d4f5] outline-none"
      />
      <Dashboard />
      <div className="-mr-[29px]">
        <ZoomBar />
      </div>
      <div className="absolute inset-y-0 right-0 w-2.5 bg-[#f2f2f5] pt-[138px]">
        <div className="h-[92%] bg-[#bababc]" />
      </div>
    </main>
  )
}

/* ---------- settings panel ---------- */

function Chevron({ open }: { open?: boolean }) {
  return (
    <svg
      viewBox="0 0 14 22"
      className={clsx("h-[22px] w-3.5", open && "rotate-90")}
      fill="none"
      stroke="#85888e"
      strokeWidth="2"
      aria-hidden="true"
    >
      <path d="m2 2 10 9-10 9" />
    </svg>
  )
}

const settings = [
  "页面级字体设置",
  "页面级图表评论设置",
  "水印设置",
  "禁用导出和其它",
  "过滤条件样式自定义",
]

function Switch({ id, label, on }: { id: string; label: string; on?: boolean }) {
  return (
    <div className="flex h-[85px] items-center justify-between text-2xl text-[#5d5f66]">
      <label htmlFor={id}>{label}</label>
      <input
        id={id}
        type="checkbox"
        role="switch"
        defaultChecked={on}
        className="h-10 w-[88px] appearance-none rounded-full bg-[#d4d6da] p-1 before:block before:size-8 before:rounded-full before:bg-white checked:bg-[#3768ea] checked:before:ml-12"
      />
    </div>
  )
}

function ControlPanel() {
  return (
    <aside className="flex w-[744px] shrink-0 flex-col border-l-6 border-[#c4c4c6] bg-white">
      <div className="flex h-[122px] shrink-0 items-center gap-6 bg-[#f1f2f4] pb-2.5 pl-[42px]">
        <button type="button" aria-label="收起面板" className="text-[44px]">
          <FaAngleDoubleRight />
        </button>
        <div className="pt-4">
          <h2 className="text-[28px] leading-10">控制面板</h2>
          <a href="#help" className="mt-2 flex items-center text-2xl leading-9 text-[#3b6cf0]">
            <svg viewBox="0 0 24 24" className="size-6" fill="none" stroke="currentColor" strokeWidth="2.200" aria-hidden="true">
              <circle cx="12" cy="12" r="10.800" />
              <path d="M8.500 9.500c0-4.500 7.300-4 7.300-.3 0 2.600-3.800 2.500-3.800 5" />
              <path d="M12 16v2.800" strokeWidth="2.800" />
            </svg>
            大屏页面整体配置
          </a>
        </div>
      </div>
      <div className="overflow-hidden">
        <input
          type="search"
          aria-label="设置项搜索"
          placeholder="设置项搜索"
          className="block h-[52px] w-[102%] rounded-lg border-2 border-[#e8e9eb] px-6 text-2xl placeholder:text-[#bfc1c5]"
        />
      </div>
      <div className="pt-11 pr-[42px] pl-12">
        {settings.map((name, i) => (
          <button
            key={name}
            type="button"
            className={clsx(
              "flex w-full items-start border-t-2 border-[#e7e8ea] pt-6 text-2xl leading-8",
              i === settings.length - 1 ? "h-[71px]" : "h-[108px]"
            )}
          >
            <span className="mr-7 h-8 w-2 bg-[#3768ea]" />
            <span className="mr-2">{name}</span>
            <span className="flex h-8 items-center">
              <Chevron open={i === settings.length - 1} />
            </span>
          </button>
        ))}
        <div className="relative">
          <Switch id="as-icon" label="过滤条件展示为图标" on />
          <div className="pointer-events-none absolute -inset-x-4 -top-5 -left-[41px] h-[115px] rounded-sm border-6 border-[#ee5d4b]" />
        </div>
        <Switch id="light" label="过滤条件使用浅色主题" />
        <Switch id="custom" label="开启过滤条件样式自定义" />
        <p className="mt-[34px] text-2xl leading-9 text-[#84868c]">
          大屏的删除、目录结构调整等，请在管理中心的『大屏管理』中进行！
        </p>
      </div>
    </aside>
  )
}

function FloatingButtons() {
  return (
    <div className="absolute right-0 bottom-6 flex flex-col items-end gap-4">
      <button
        type="button"
        aria-label="AI"
        className="-mr-1.5 flex size-[62px] items-center justify-center rounded-full border-2 border-[#ecebfb] bg-white shadow-lg shadow-black/5"
      >
        <svg viewBox="0 0 34 32" className="w-[34px]" fill="none" stroke="#4d57ea" strokeWidth="3" strokeLinejoin="round" aria-hidden="true">
          <path d="M2 2h24v28H2ZM26 9h6v19a2 2 0 0 1-2 2h-4" />
          <path d="m8 24 6-16 6 16M10 19h8" />
        </svg>
      </button>
      <button
        type="button"
        aria-label="助手"
        className="flex h-20 w-[68px] items-center rounded-l-full bg-white pl-[22px] shadow-[0_0_24px_rgba(0,0,0,.14)]"
      >
        <svg viewBox="0 0 44 48" className="w-11 shrink-0" aria-hidden="true">
          <defs>
            <linearGradient id="petal0" x1="0" y1="1" x2="1" y2="0">
              <stop offset="0" stopColor="#4f4bf5" />
              <stop offset=".5" stopColor="#c15fe0" />
              <stop offset="1" stopColor="#f6a3a0" />
            </linearGradient>
            <linearGradient id="petal1" x1="0" y1="0" x2="1" y2="1">
              <stop offset="0" stopColor="#fbb9a0" />
              <stop offset=".5" stopColor="#dd7fc0" />
              <stop offset="1" stopColor="#6a45f2" />
            </linearGradient>
            <linearGradient id="petal2" x1="0" y1="0" x2="1" y2="0">
              <stop offset="0" stopColor="#3f50f6" />
              <stop offset="1" stopColor="#6a7df8" />
            </linearGradient>
          </defs>
          <path d="M22 0 31 5 13 16 10 28 0 24V12Z" fill="url(#petal0)" />
          <path d="m33 6 11 6v24l-10 5V18L24 11Z" fill="url(#petal1)" />
          <path d="m0 26 12 5 10 5 11-5v11L22 48 0 36Z" fill="url(#petal2)" />
        </svg>
      </button>
    </div>
  )
}

export default function App() {
  return (
    <div className="relative flex h-screen flex-col overflow-hidden font-['Liberation_Sans','Noto_Sans_CJK_SC',sans-serif] text-[#171a26]">
      <Header />
      <div className="flex min-h-0 flex-1">
        <LayerPanel />
        <Stage />
        <ControlPanel />
      </div>
      <FloatingButtons />
    </div>
  )
}
